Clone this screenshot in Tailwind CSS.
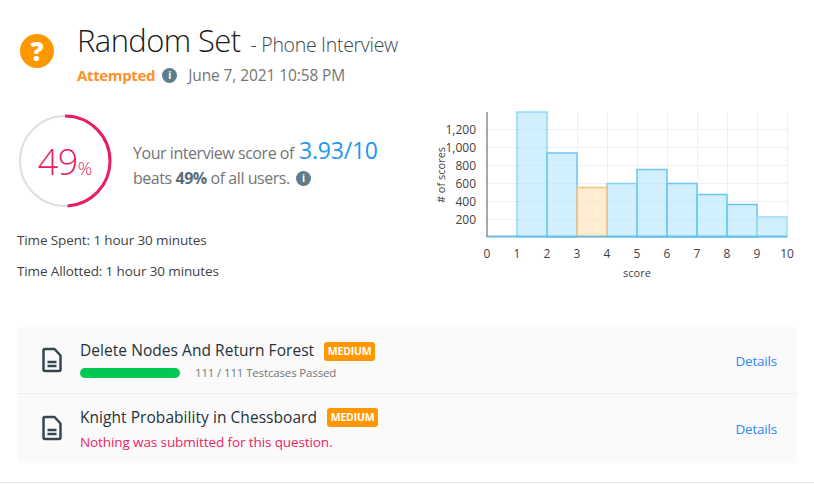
<!DOCTYPE html>
<html lang="en">
<head>
    <meta charset="UTF-8">
    <title>Random Set - Phone Interview</title>
    <script src="https://cdn.jsdelivr.net/npm/@tailwindcss/browser@4"></script>
</head>
<body class="bg-white w-[814px] h-[484px] overflow-hidden font-['Open_Sans',sans-serif] text-[#263238]">
    <div class="h-[483px] border-b border-[#e5e5e5] relative">

        <!-- Header -->
        <div class="flex pl-[20px] pt-[19px] h-[92px]">
            <div class="w-[34px] h-[34px] mt-[15px] rounded-full bg-[#ff9800] text-white flex items-center justify-center text-[26px] font-extrabold leading-none">?</div>
            <div class="ml-[23px]">
                <div class="flex items-baseline h-[42px]">
                    <span class="text-[31px] leading-[42px] font-light text-[#1a1a1a] tracking-[-0.6px]">Random Set</span>
                    <span class="ml-[10px] text-[19.5px] font-light text-[#37474f] tracking-[-0.3px]">- Phone Interview</span>
                </div>
                <div class="flex items-center mt-[3px] text-[14px] leading-[22px]">
                    <span class="font-bold text-[15px] text-[#ff8f2b] tracking-[-0.35px]">Attempted</span>
                    <span class="ml-[7px] w-[15px] h-[15px] rounded-full bg-[#607d8b] text-white text-[10px] font-bold leading-none flex items-center justify-center">i</span>
                    <span class="ml-[11px] text-[15.5px] text-[#757575] tracking-[-0.1px]">June 7, 2021 10:58 PM</span>
                </div>
            </div>
        </div>

        <!-- Score + chart -->
        <div class="flex h-[215px]">
            <div class="w-[430px] pl-[18px] pt-[22px]">
                <div class="flex items-center">
                    <div class="relative w-[94px] h-[94px] shrink-0">
                        <svg width="94" height="94" viewBox="0 0 94 94" class="absolute inset-0">
                            <circle cx="47" cy="47" r="45" fill="none" stroke="#e0e0e0" stroke-width="2"/>
                            <circle cx="47" cy="47" r="45" fill="none" stroke="#e91e63" stroke-width="3" stroke-dasharray="138.5 283" transform="rotate(-90 47 47)"/>
                        </svg>
                        <div class="absolute inset-0 flex items-baseline justify-center pt-[25px] text-[#e91e63] font-light">
                            <span class="text-[36px] leading-[46px] tracking-[-0.5px]">49</span><span class="text-[18px] leading-none">%</span>
                        </div>
                    </div>
                    <div class="ml-[21px] mt-[6px] text-[16px] text-[#757575] tracking-[-0.45px]">
                        <div class="h-[28px] flex items-baseline">Your interview score of <span class="ml-[5px] text-[23px] leading-[28px] text-[#2196f3] tracking-[-0.2px]">3.93/10</span></div>
                        <div class="h-[28px] flex items-center">
                            <span>beats <b class="text-[#546e7a] font-bold">49%</b> of all users.</span>
                            <span class="ml-[6px] w-[15px] h-[15px] rounded-full bg-[#607d8b] text-white text-[10px] font-bold leading-none flex items-center justify-center">i</span>
                        </div>
                    </div>
                </div>
                <div class="-ml-[1px] mt-[17px] text-[13.5px] leading-[31px] text-[#424242] tracking-[-0.12px]">
                    <div>Time Spent: 1 hour 30 minutes</div>
                    <div>Time Allotted: 1 hour 30 minutes</div>
                </div>
            </div>

            <svg width="384" height="215" viewBox="430 92 384 215" class="block font-['Open_Sans',sans-serif]">
                <g stroke="#f0f0f0" stroke-width="1">
                    <path d="M487.5 129.5H787M487.5 147.5H787M487.5 165.5H787M487.5 183.5H787M487.5 201.5H787M487.5 219.5H787"/>
                    <path d="M517.5 112V237M547.5 112V237M577.5 112V237M607.5 112V237M637.5 112V237M667.5 112V237M697.5 112V237M727.5 112V237M757.5 112V237M787.5 112V237"/>
                </g>
                <g fill="#b3e5fc" fill-opacity="0.6" stroke="#81d4fa" stroke-width="1.5">
                    <rect x="517" y="112" width="30" height="125" stroke="#90d8f8"/>
                    <rect x="547" y="153" width="30" height="84" stroke="#6cc6f2"/>
                    <rect x="607" y="183.500" width="30" height="53.500" stroke="#86d3f6"/>
                    <rect x="637" y="169.500" width="30" height="67.500" stroke="#6cc6f2"/>
                    <rect x="667" y="183.500" width="30" height="53.500" stroke="#6cc6f2"/>
                    <rect x="697" y="194.500" width="30" height="42.500" stroke="#64c8fa"/>
                    <rect x="727" y="204.500" width="30" height="32.500" stroke="#64c8fa"/>
                    <rect x="757" y="217" width="30" height="20" stroke="#a0dcf8"/>
                </g>
                <rect x="577" y="187.500" width="30" height="49.500" fill="#ffe0b2" fill-opacity="0.6" stroke="#f2c27e" stroke-width="1.5"/>
                <path d="M487 236.500H787" stroke="#6cc0e4" stroke-width="2"/>
                <path d="M487 112V237" stroke="#8a8a8a" stroke-width="1.500"/>
                <g font-size="12" fill="#424242" text-anchor="end">
                    <text x="476" y="134">1,200</text>
                    <text x="476" y="152">1,000</text>
                    <text x="476" y="170">800</text>
                    <text x="476" y="188">600</text>
                    <text x="476" y="206">400</text>
                    <text x="476" y="224">200</text>
                </g>
                <g font-size="12" fill="#424242" text-anchor="middle">
                    <text x="487" y="258">0</text>
                    <text x="517" y="258">1</text>
                    <text x="547" y="258">2</text>
                    <text x="577" y="258">3</text>
                    <text x="607" y="258">4</text>
                    <text x="637" y="258">5</text>
                    <text x="667" y="258">6</text>
                    <text x="697" y="258">7</text>
                    <text x="727" y="258">8</text>
                    <text x="757" y="258">9</text>
                    <text x="787" y="258">10</text>
                    <text x="637" y="277" font-size="11">score</text>
                    <text transform="translate(445 175) rotate(-90)" font-size="11">#  of scores</text>
                </g>
            </svg>
        </div>

        <!-- Question list -->
        <div class="mx-[17px] mt-[20px] rounded-[3px] bg-[#fafafa]">
            <div class="h-[67px] border-b border-[#eeeeee] flex items-center pl-[24px] pr-[20px]">
                <svg width="22" height="26" viewBox="0 0 22 26" class="shrink-0" fill="none" stroke="#37474f" stroke-width="2.500" stroke-linejoin="round">
                    <path d="M2.500 3.500a1.500 1.500 0 0 1 1.500-1.500h9.500l6 6.500v14a1.500 1.500 0 0 1-1.500 1.500h-14a1.500 1.500 0 0 1-1.500-1.500z"/>
                    <path d="M6.500 15h9M6.500 19h9"/>
                </svg>
                <div class="ml-[17px] mt-[3px] flex-1">
                    <div class="flex items-center h-[22px]">
                        <span class="text-[15.500px] font-medium text-[#263238] tracking-[0.05px]">Delete Nodes And Return Forest</span>
                        <span class="ml-[10px] h-[19px] w-[51px] text-center rounded-[3px] bg-[#ff9800] text-white text-[10.500px] font-bold leading-[19px] tracking-[-0.2px]">MEDIUM</span>
                    </div>
                    <div class="flex items-center h-[20px] mt-[1px]">
                        <div class="w-[100px] h-[10px] rounded-full bg-[#00c853]"></div>
                        <span class="ml-[15px] text-[11.500px] text-[#757575] tracking-[-0.15px]">111 / 111 Testcases Passed</span>
                    </div>
                </div>
                <a class="mt-[3px] text-[13.500px] text-[#2f86f6] tracking-[-0.2px]">Details</a>
            </div>
            <div class="h-[69px] flex items-center pl-[24px] pr-[20px]">
                <svg width="22" height="26" viewBox="0 0 22 26" class="shrink-0 -mt-[1px]" fill="none" stroke="#37474f" stroke-width="2.500" stroke-linejoin="round">
                    <path d="M2.500 3.500a1.500 1.500 0 0 1 1.500-1.500h9.500l6 6.500v14a1.500 1.500 0 0 1-1.500 1.500h-14a1.500 1.500 0 0 1-1.500-1.500z"/>
                    <path d="M6.500 15h9M6.500 19h9"/>
                </svg>
                <div class="ml-[17px] mt-[1px] flex-1">
                    <div class="flex items-center h-[22px]">
                        <span class="text-[15.500px] font-medium text-[#263238] tracking-[0.05px]">Knight Probability in Chessboard</span>
                        <span class="ml-[10px] h-[19px] w-[51px] text-center rounded-[3px] bg-[#ff9800] text-white text-[10.500px] font-bold leading-[19px] tracking-[-0.2px]">MEDIUM</span>
                    </div>
                    <div class="mt-[3px] text-[13.500px] leading-[20px] text-[#e91e63] tracking-[-0.1px]">Nothing was submitted for this question.</div>
                </div>
                <a class="mt-[1px] text-[13.500px] text-[#2f86f6] tracking-[-0.2px]">Details</a>
            </div>
        </div>
    </div>
</body>
</html>
